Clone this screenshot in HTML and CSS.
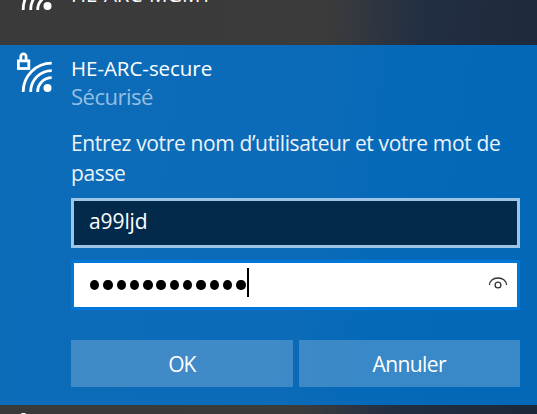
FILE: index.html
```
<!DOCTYPE html>
<html lang="fr">
<head>
    <meta charset="UTF-8">
    <meta name="viewport" content="width=device-width, initial-scale=1.0">
    <title>Réseaux Wi-Fi</title>
    <link rel="stylesheet" href="styles.css">
</head>
<body>
    <div class="network-list">
        <div class="network previous">
            <svg class="wifi-icon" viewBox="0 0 40 45">
                <path class="arc" d="M7.2 41V40.6A28.5 28.5 0 0 1 35.7 12.1M14.7 41V40.6A21 21 0 0 1 35.7 19.6M21.7 41V40.6A14 14 0 0 1 35.7 26.6"/>
                <circle cx="31.5" cy="37" r="4"/>
            </svg>
            <div class="network-name name-cut">HE-ARC-MGMT</div>
        </div>

        <div class="network selected">
            <svg class="wifi-icon" viewBox="0 0 40 45">
                <rect class="arc" x="2.4" y="9.9" width="10.4" height="7.6"/>
                <path class="arc" d="M4.8 10V5.8A2.65 2.9 0 0 1 10.1 5.8V10"/>
                <path class="arc" d="M7.2 41V40.6A28.5 28.5 0 0 1 35.7 12.1M14.7 41V40.6A21 21 0 0 1 35.7 19.6M21.7 41V40.6A14 14 0 0 1 35.7 26.6"/>
                <circle cx="31.5" cy="37.1" r="4"/>
            </svg>
            <div class="details">
                <div class="network-name">HE-ARC-secure</div>
                <div class="status">Sécurisé</div>
                <p class="message">Entrez votre nom d’utilisateur et votre mot de<br>passe</p>
                <div class="field user"><span class="user-value">a99ljd</span></div>
                <div class="field password">
                    <div class="dots">
                        <i></i><i></i><i></i><i></i><i></i><i></i><i></i><i></i><i></i><i></i><i></i><i></i>
                    </div>
                    <span class="caret"></span>
                    <svg class="eye" viewBox="0 0 20 14">
                        <path d="M1.5 9C1.5 5 5 2 10 2S18.5 5 18.5 9"/>
                        <circle cx="10" cy="9" r="2.9"/>
                    </svg>
                </div>
                <div class="buttons">
                    <button class="button"><span class="ok">OK</span></button>
                    <button class="button"><span class="cancel">Annuler</span></button>
                </div>
            </div>
        </div>

        <div class="network next">
            <svg class="lock-icon" viewBox="0 0 13 18">
                <path class="arc" d="M3.8 9V4.2A2.65 2.9 0 0 1 9.1 4.2V9"/>
            </svg>
        </div>
    </div>
</body>
</html>
```
FILE: styles.css
```
body {
    margin: 0;
    overflow: hidden;
    font-family: "Open Sans", "Noto Sans", sans-serif;
    font-size: 21px;
    color: #ffffff;
}
.network-list {
    width: 537px;
    height: 414px;
    overflow: hidden;
    background: linear-gradient(94deg, #3a3a3a 0%, #3b3b3b 58%, #303640 66%, #222e42 75%, #1e283b 100%);
}
.network {
    display: flex;
    box-sizing: border-box;
    padding-left: 16px;
    overflow: hidden;
}
.wifi-icon {
    flex: none;
    width: 40px;
    height: 45px;
    fill: #ffffff;
}
.arc {
    fill: none;
    stroke: #ffffff;
    stroke-width: 2.8;
}
.previous {
    height: 45px;
}
.previous .wifi-icon {
    margin-top: -31px;
}
.name-cut {
    margin: -20px 0 0 15px;
}
.selected {
    height: 360px;
    padding-top: 6px;
    background: linear-gradient(98deg, #0d6cb8 0%, #0c6bb8 54%, #0569b9 70%, #0468b9 100%);
}
.details {
    width: 449px;
    margin-left: 15px;
}
.network-name {
    height: 28px;
    line-height: 28px;
    font-size: 20.5px;
    letter-spacing: -0.05px;
    white-space: nowrap;
}
.details .network-name {
    margin-top: 3px;
}
.status {
    height: 28px;
    line-height: 28px;
    font-size: 22px;
    letter-spacing: -0.5px;
    color: #95bfe2;
}
.message {
    margin: 18px 0 10px;
    line-height: 30px;
    letter-spacing: -0.36px;
    white-space: nowrap;
    color: #eaf3fa;
}
.field {
    display: flex;
    align-items: center;
    box-sizing: border-box;
    width: 449px;
    height: 50px;
    padding-left: 15px;
    border: 3px solid #9bc4e6;
}
.user {
    background-color: #032a4a;
}
.user-value {
    line-height: 30px;
    margin-top: -4px;
    letter-spacing: -0.1px;
}
.password {
    margin-top: 12px;
    padding: 0 9px 0 16px;
    border-color: #0078d9;
    background-color: #ffffff;
}
.dots {
    display: flex;
    gap: 3.85px;
}
.dots i {
    width: 9.45px;
    height: 10.4px;
    border-radius: 50%;
    background-color: #000000;
}
.caret {
    width: 2px;
    height: 29px;
    margin: -5px 0 0 1px;
    background-color: #000000;
}
.eye {
    width: 20px;
    height: 14px;
    margin: -4px 0 0 auto;
    fill: none;
    stroke: #333333;
    stroke-width: 1.3;
}
.buttons {
    display: flex;
    gap: 6px;
    margin-top: 30px;
}
.button {
    width: 222px;
    height: 47px;
    padding: 0;
    border: none;
    background-color: rgba(255, 255, 255, 0.21);
    color: #ffffff;
    font: inherit;
}
.ok {
    letter-spacing: -1px;
}
.cancel {
    letter-spacing: -0.6px;
}
.next {
    height: 9px;
}
.lock-icon {
    flex: none;
    width: 13px;
    height: 18px;
    margin: 8px 0 0 1px;
}
```
